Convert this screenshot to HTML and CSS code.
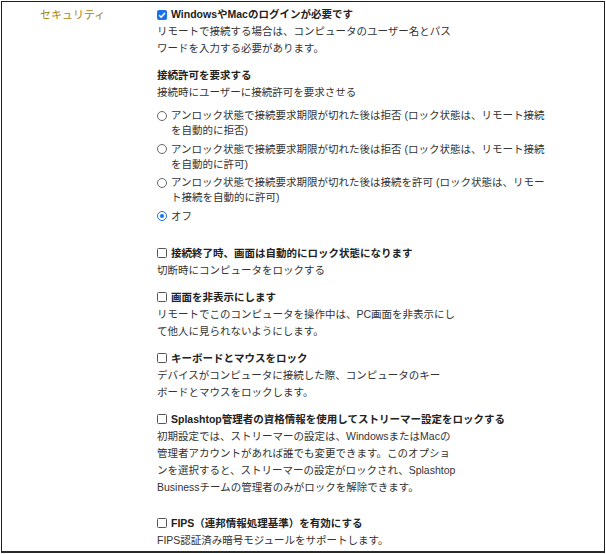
FILE: index.html
```html
<!DOCTYPE html>
<html lang="ja">
<head>
<meta charset="utf-8">
<link rel="stylesheet" href="styles.css">
</head>
<body>
<div class="frame">
  <div class="label">セキュリティ</div>
  <div class="content">
    <div class="group first">
      <div class="opt title"><span class="cb checked"><svg viewBox="0 0 10 10" width="10" height="10"><path d="M2.2 5.2 L4.2 7.2 L7.9 3" fill="none" stroke="#fff" stroke-width="1.6"/></svg></span><span>WindowsやMacのログインが必要です</span></div>
      <div class="desc">リモートで接続する場合は、コンピュータのユーザー名とパス<br>ワードを入力する必要があります。</div>
    </div>
    <div class="group g2">
      <div class="title">接続許可を要求する</div>
      <div class="desc">接続時にユーザーに接続許可を要求させる</div>
      <div class="radios">
        <div class="radio"><span class="rb"></span><span>アンロック状態で接続要求期限が切れた後は拒否 (ロック状態は、リモート接続<br>を自動的に拒否)</span></div>
        <div class="radio"><span class="rb"></span><span>アンロック状態で接続要求期限が切れた後は拒否 (ロック状態は、リモート接続<br>を自動的に許可)</span></div>
        <div class="radio"><span class="rb"></span><span>アンロック状態で接続要求期限が切れた後は接続を許可 (ロック状態は、リモー<br>ト接続を自動的に許可)</span></div>
        <div class="radio"><span class="rb on"></span><span>オフ</span></div>
      </div>
    </div>
    <div class="group g3">
      <div class="opt title"><span class="cb"></span><span>接続終了時、画面は自動的にロック状態になります</span></div>
      <div class="desc">切断時にコンピュータをロックする</div>
    </div>
    <div class="group">
      <div class="opt title"><span class="cb"></span><span>画面を非表示にします</span></div>
      <div class="desc">リモートでこのコンピュータを操作中は、PC画面を非表示にし<br>て他人に見られないようにします。</div>
    </div>
    <div class="group">
      <div class="opt title"><span class="cb"></span><span>キーボードとマウスをロック</span></div>
      <div class="desc">デバイスがコンピュータに接続した際、コンピュータのキー<br>ボードとマウスをロックします。</div>
    </div>
    <div class="group">
      <div class="opt title"><span class="cb"></span><span>Splashtop管理者の資格情報を使用してストリーマー設定をロックする</span></div>
      <div class="desc">初期設定では、ストリーマーの設定は、WindowsまたはMacの<br>管理者アカウントがあれば誰でも変更できます。このオプショ<br>ンを選択すると、ストリーマーの設定がロックされ、Splashtop<br>Businessチームの管理者のみがロックを解除できます。</div>
    </div>
    <div class="group g7">
      <div class="opt title"><span class="cb"></span><span>FIPS（連邦情報処理基準）を有効にする</span></div>
      <div class="desc">FIPS認証済み暗号モジュールをサポートします。</div>
    </div>
  </div>
</div>
</body>
</html>
```
FILE: styles.css
```css
html, body {
  margin: 0;
  padding: 0;
  background: #fff;
}
body {
  font-family: "Liberation Sans", "Noto Sans CJK JP", sans-serif;
  font-size: 10.5px;
  color: #333;
}
.frame {
  box-sizing: border-box;
  width: 604px;
  height: 552px;
  margin: 1px 0 0 1px;
  border: 1px solid #1e1e1e;
  border-bottom: 2px solid #2a2a2a;
  box-shadow: 0 1px 0 #c8c8c8;
  display: flex;
  overflow: hidden;
}
.label {
  width: 117px;
  padding-left: 38px;
  padding-top: 5px;
  line-height: 17px;
  color: #a8840e;
  font-size: 11px;
  white-space: nowrap;
}
.content {
  flex: 1;
  padding-top: 4px;
  white-space: nowrap;
}
.group {
  margin-top: 10px;
}
.group.first {
  margin-top: 0;
}
.group.g3 {
  margin-top: 21px;
}
.group.g7 {
  margin-top: 19px;
}
.title {
  font-weight: bold;
  color: #222;
  line-height: 17px;
}
.desc {
  line-height: 17px;
}
.opt {
  display: flex;
  align-items: center;
  gap: 4px;
}
.cb {
  box-sizing: border-box;
  width: 10px;
  height: 10px;
  border: 1px solid #555;
  border-radius: 1.5px;
  background: #fff;
  flex: none;
  display: flex;
}
.cb.checked {
  background: #1a73e8;
  border-color: #1a73e8;
}
.cb svg {
  margin: -1px;
}
.radios {
  margin-top: 7px;
  display: flex;
  flex-direction: column;
  gap: 3.5px;
}
.radio {
  display: flex;
  align-items: flex-start;
  gap: 4px;
  line-height: 15px;
}
.rb {
  box-sizing: border-box;
  width: 10px;
  height: 10px;
  margin-top: 2.5px;
  border: 1px solid #666;
  border-radius: 50%;
  flex: none;
  position: relative;
}
.rb.on {
  border-color: #1a73e8;
}
.rb.on::after {
  content: "";
  position: absolute;
  left: 2px;
  top: 2px;
  width: 4px;
  height: 4px;
  border-radius: 50%;
  background: #1a73e8;
}
```
